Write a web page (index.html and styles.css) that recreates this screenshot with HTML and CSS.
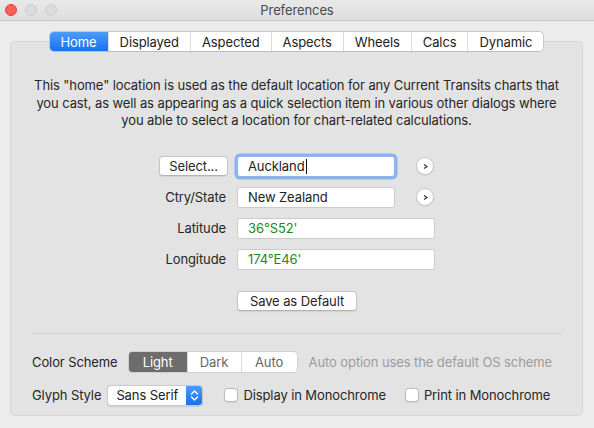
FILE: index.html
```html
<!DOCTYPE html>
<html lang="en">
<head>
<meta charset="utf-8">
<title>Preferences</title>
<link rel="stylesheet" href="styles.css">
</head>
<body>
<div class="window">
  <header class="titlebar">
    <div class="lights">
      <span class="light red"></span>
      <span class="light"></span>
      <span class="light"></span>
    </div>
    <div class="title">Preferences</div>
    <div class="spacer"></div>
  </header>
  <main class="content">
    <nav class="tabs">
      <span class="tab active">Home</span>
      <span class="tab">Displayed</span>
      <span class="tab">Aspected</span>
      <span class="tab">Aspects</span>
      <span class="tab">Wheels</span>
      <span class="tab">Calcs</span>
      <span class="tab">Dynamic</span>
    </nav>
    <section class="panel">
      <p class="intro">This "home" location is used as the default location for any Current Transits charts that<br>you cast, as well as appearing as a quick selection item in various other dialogs where<br>you able to select a location for chart-related calculations.</p>
      <div class="form">
        <button class="btn select">Select...</button>
        <div class="field focus">Auckland<span class="caret"></span></div>
        <button class="round"><svg width="7" height="7" viewBox="0 0 7 7"><path d="M2 1.5 L5 3.5 L2 5.5" fill="none" stroke="#333" stroke-width="1.2"/></svg></button>

        <span class="lbl">Ctry/State</span>
        <div class="field">New Zealand</div>
        <button class="round"><svg width="7" height="7" viewBox="0 0 7 7"><path d="M2 1.5 L5 3.5 L2 5.5" fill="none" stroke="#333" stroke-width="1.2"/></svg></button>

        <span class="lbl">Latitude</span>
        <div class="field wide green">36°S52'</div>

        <span class="lbl">Longitude</span>
        <div class="field wide green">174°E46'</div>

        <button class="btn save">Save as Default</button>
      </div>
      <hr class="sep">
      <div class="row scheme">
        <span class="rlabel">Color Scheme</span>
        <div class="seg">
          <span class="seg-item on">Light</span>
          <span class="seg-item">Dark</span>
          <span class="seg-item">Auto</span>
        </div>
        <span class="hint">Auto option uses the default OS scheme</span>
      </div>
      <div class="row glyph">
        <span class="rlabel">Glyph Style</span>
        <div class="popup">
          <span class="popup-text">Sans Serif</span>
          <span class="stepper"><svg width="9" height="13" viewBox="0 0 9 13"><path d="M1.5 5 L4.5 2 L7.5 5 M1.5 8 L4.5 11 L7.5 8" fill="none" stroke="#fff" stroke-width="1.4" stroke-linecap="round" stroke-linejoin="round"/></svg></span>
        </div>
        <span class="check check-display"><span class="box"></span>Display in Monochrome</span>
        <span class="check check-print"><span class="box"></span>Print in Monochrome</span>
      </div>
    </section>
  </main>
</div>
</body>
</html>
```

FILE: styles.css
```css
* { box-sizing: border-box; }

html, body {
  margin: 0;
  padding: 0;
}

body {
  width: 594px;
  height: 428px;
  overflow: hidden;
  background: #ececec;
  font-family: "Inter", "Liberation Sans", sans-serif;
  font-size: 13px;
  color: #262626;
  letter-spacing: -0.1px;
}

.window {
  display: flex;
  flex-direction: column;
  height: 428px;
}

.titlebar {
  height: 21px;
  display: grid;
  grid-template-columns: 1fr auto 1fr;
  align-items: center;
  background: linear-gradient(#e9e9e9, #dedede);
  border-bottom: 1px solid #c6c6c6;
}

.lights {
  display: flex;
  gap: 8px;
  padding-left: 5px;
}

.light {
  width: 12px;
  height: 12px;
  border-radius: 50%;
  background: #dcdcdc;
  border: 1px solid #cdcdcd;
}

.light.red {
  background: #fd5e57;
  border-color: #e0443e;
}

.title {
  color: #4a4a4a;
  font-size: 13px;
}

.content {
  flex: 1;
  padding: 10px 11px 12px 10px;
  display: flex;
  flex-direction: column;
}

.tabs {
  align-self: center;
  display: flex;
  height: 21px;
  background: #fff;
  border: 1px solid #c8c8c8;
  border-bottom-color: #bcbcbc;
  border-radius: 5px;
  position: relative;
  z-index: 1;
  overflow: hidden;
}

.tab {
  display: flex;
  align-items: center;
  justify-content: center;
  padding: 0 11px;
  border-left: 1px solid #dcdcdc;
  color: #222;
}

.tab:first-child { border-left: none; }

.tab.active {
  background: linear-gradient(#4b9cfa, #1872ef);
  color: #fff;
}

.panel {
  flex: 1;
  margin-top: -11px;
  background: #e3e3e3;
  border: 1px solid #d6d6d6;
  border-radius: 5px;
  padding: 35px 20px 9px 20px;
  display: flex;
  flex-direction: column;
}

.intro {
  margin: 0;
  text-align: center;
  line-height: 17.5px;
  color: #262626;
}

.form {
  margin-top: 26px;
  margin-left: 119px;
  display: grid;
  grid-template-columns: 78px 158px 31px;
  column-gap: 9px;
  row-gap: 10px;
  align-items: center;
}

.lbl {
  text-align: right;
  padding-right: 2px;
}

.btn {
  font: inherit;
  letter-spacing: inherit;
  color: #262626;
  background: #fff;
  border: 1px solid #c6c6c6;
  border-bottom-color: #b4b4b4;
  border-radius: 4px;
  height: 20px;
  padding: 0;
  box-shadow: 0 0.5px 1px rgba(0,0,0,0.08);
}

.btn.select {
  width: 69px;
  justify-self: end;
}

.btn.save {
  grid-column: 2 / 4;
  justify-self: start;
  width: 120px;
  margin-top: 11px;
}

.field {
  height: 21px;
  background: #fff;
  border: 1px solid #cbcbcb;
  border-radius: 3px;
  padding-left: 10px;
  display: flex;
  align-items: center;
  color: #222;
}

.field.focus {
  border-color: #8fb4ea;
  box-shadow: 0 0 0 2.5px #8bb3ec;
}

.caret {
  display: inline-block;
  width: 1px;
  height: 15px;
  background: #111;
  margin-left: 1px;
}

.field.wide { grid-column: 2 / 4; }

.field.green { color: #1a8a1e; }

.round {
  justify-self: end;
  margin-right: 1px;
  width: 18px;
  height: 18px;
  border-radius: 50%;
  background: #fff;
  border: 1px solid #c9c9c9;
  box-shadow: 0 0.5px 1px rgba(0,0,0,0.12);
  padding: 0;
  display: flex;
  align-items: center;
  justify-content: center;
}

.sep {
  margin: 22px 0 0 0;
  border: none;
  border-top: 1px solid #cfcfcf;
  height: 0;
}

.row {
  display: flex;
  align-items: center;
}

.scheme {
  margin-top: 17px;
  height: 22px;
}

.glyph {
  margin-top: 12px;
  height: 21px;
}

.rlabel { padding-left: 1px; }

.scheme .rlabel { margin-right: 10px; }
.glyph .rlabel { margin-right: 6px; }

.seg {
  display: flex;
  height: 22px;
  background: #fff;
  border: 1px solid #d0d0d0;
  border-radius: 4px;
  overflow: hidden;
}

.seg-item {
  display: flex;
  align-items: center;
  justify-content: center;
  border-left: 1px solid #dadada;
  color: #666;
}

.seg-item:nth-child(1) { width: 58px; border-left: none; }
.seg-item:nth-child(2) { width: 54px; }
.seg-item:nth-child(3) { width: 56px; }

.seg-item.on {
  background: #6d6d6d;
  color: #fff;
}

.hint {
  margin-left: 11px;
  color: #9c9c9c;
}

.popup {
  display: flex;
  width: 96px;
  height: 21px;
  background: #fff;
  border: 1px solid #cacaca;
  border-radius: 4px;
  overflow: hidden;
  box-shadow: 0 0.5px 1px rgba(0,0,0,0.1);
}

.popup-text {
  flex: 1;
  display: flex;
  align-items: center;
  padding-left: 8px;
  color: #222;
}

.stepper {
  width: 16px;
  display: flex;
  align-items: center;
  justify-content: center;
  background: linear-gradient(#4a9bfa, #1772ef);
}

.check {
  display: flex;
  align-items: center;
  gap: 5px;
  color: #262626;
}

.check-display { margin-left: 21px; }
.check-print { margin-left: 19px; }

.box {
  width: 14px;
  height: 14px;
  background: #fff;
  border: 1px solid #b9b9b9;
  border-radius: 3.5px;
  box-shadow: 0 0.5px 1px rgba(0,0,0,0.08);
}
```
